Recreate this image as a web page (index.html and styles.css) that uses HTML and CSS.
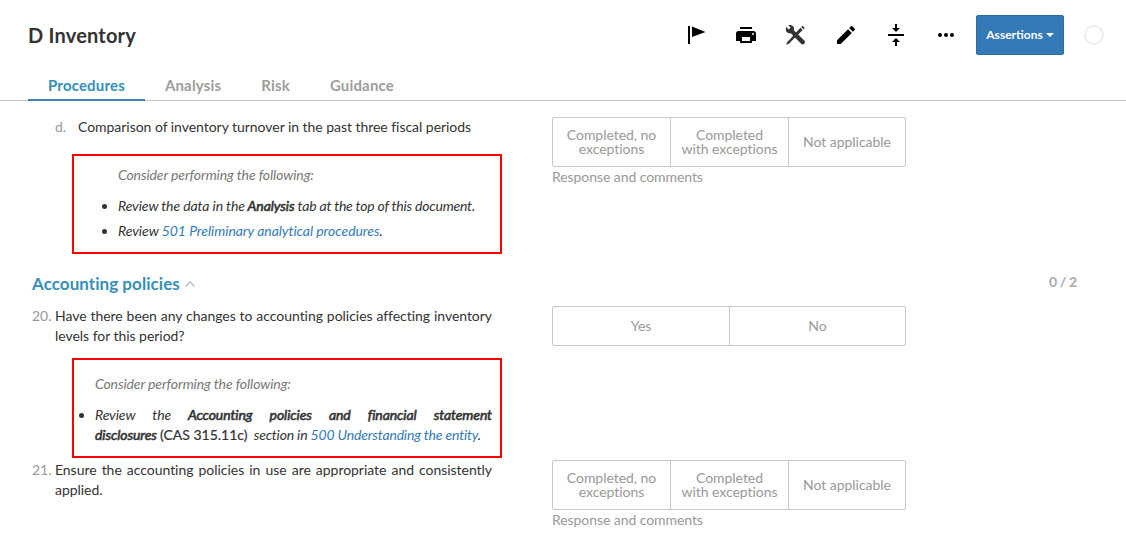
FILE: index.html
```html
<!DOCTYPE html>
<html lang="en">
<head>
<meta charset="utf-8">
<title>D Inventory</title>
<link rel="stylesheet" href="styles.css">
</head>
<body>
<header class="header">
  <h1 class="title"><span>D Inventory</span></h1>
  <div class="toolbar">
    <svg class="icon" viewBox="0 0 24 24"><path d="M3 3h2v18H3zM7 3.500L20.500 9 7 14z" transform="translate(1 0)"/></svg>
    <svg class="icon" viewBox="0 0 24 24"><path d="M6 4h12v2H6zM19.500 8h-15C3 8 2 9 2 10.500V18h4v2h12v-2h4v-7.500C22 9 21 8 19.500 8zM16 18H8v-4h8zm3-6a1 1 0 1 1 0-2 1 1 0 0 1 0 2z"/></svg>
    <svg class="icon tools" viewBox="0 0 24 24"><path d="M18.500 2.700l2.300 2.300-1.300 1.300L17.200 4zM16.400 4.800l2.300 2.300L6 19.600l-1.600-1.600z"/><path d="M4 17.500l2.500 2.500L2 21.800z"/><path d="M2.200 4l2.600 2.400 1.900-1.800L4.300 2.200c2-.7 3.900-.2 5 1.300.8 1.100.9 2.500.5 3.700l10.500 10.400c.9.900.9 2.200 0 3.100s-2.200.9-3.100 0L6.800 10.200c-1.400.4-3 .1-4-1.100C1.700 7.800 1.500 5.600 2.200 4z"/></svg>
    <svg class="icon" viewBox="0 0 24 24"><path d="M3 17.250V21h3.750L17.810 9.940l-3.750-3.750zM20.710 7.040a1 1 0 0 0 0-1.410l-2.340-2.340a1 1 0 0 0-1.410 0l-1.830 1.830 3.750 3.750z"/></svg>
    <svg class="icon" viewBox="0 0 24 24"><path d="M4 11h16v2H4zM11 1h2v4h3l-4 4-4-4h3zM11 23h2v-4h3l-4-4-4 4h3z"/></svg>
    <svg class="icon" viewBox="0 0 24 24"><circle cx="6" cy="12" r="2"/><circle cx="12" cy="12" r="2"/><circle cx="18" cy="12" r="2"/></svg>
  </div>
  <button class="assertions"><span class="assertions-label">Assertions</span><span class="caret"></span></button>
  <div class="ring"></div>
</header>
<nav class="tabs">
  <a class="tab active">Procedures</a>
  <a class="tab">Analysis</a>
  <a class="tab">Risk</a>
  <a class="tab">Guidance</a>
</nav>
<main class="content">
  <section class="row row-d">
    <div class="question">
      <div class="prompt sub"><span class="num">d.</span><p>Comparison of inventory turnover in the past three fiscal periods</p></div>
      <div class="guidance wide">
        <p class="lead">Consider performing the following:</p>
        <ul>
          <li>Review the data in the <b>Analysis</b> <span class="tight">tab at the top of this document.</span></li>
          <li class="open">Review <a>501 Preliminary analytical procedures</a>.</li>
        </ul>
      </div>
    </div>
    <div class="answer">
      <div class="choices three"><span>Completed, no<br>exceptions</span><span>Completed<br>with exceptions</span><span>Not applicable</span></div>
      <p class="comment">Response and comments</p>
    </div>
  </section>
  <div class="section-head">
    <h2>Accounting policies</h2>
    <svg class="chevron" viewBox="0 0 12 8"><path d="M1.500 6.500L6 2l4.500 4.500"/></svg>
    <span class="count">0 / 2</span>
  </div>
  <section class="row row-20">
    <div class="question">
      <div class="prompt"><span class="num">20.</span><p>Have there been any changes to accounting policies affecting inventory levels for this period?</p></div>
      <div class="guidance narrow">
        <p class="lead">Consider performing the following:</p>
        <ul>
          <li>Review the <b>Accounting policies and financial statement</b> <span class="keep"><b>disclosures</b> <span class="cite">(CAS 315.11c)</span></span><span class="tail">&nbsp; section in <a>500 Understanding the entity</a>.</span></li>
        </ul>
      </div>
    </div>
    <div class="answer">
      <div class="choices two"><span>Yes</span><span>No</span></div>
    </div>
  </section>
  <section class="row">
    <div class="question">
      <div class="prompt"><span class="num">21.</span><p>Ensure the accounting policies in use are appropriate and consistently applied.</p></div>
    </div>
    <div class="answer">
      <div class="choices three"><span>Completed, no<br>exceptions</span><span>Completed<br>with exceptions</span><span>Not applicable</span></div>
      <p class="comment">Response and comments</p>
    </div>
  </section>
</main>
</body>
</html>
```

FILE: styles.css
```css
* { box-sizing: border-box; }
body { margin: 0; height: 536px; overflow: hidden; background: #fff; color: #333; font: 14px/20px Lato, sans-serif; font-variant-ligatures: none; letter-spacing: -0.04px; }
p, h1, h2, ul { margin: 0; padding: 0; }

.header { display: flex; align-items: center; height: 70px; padding: 0 22px 0 28px; }
.title { flex: 1; font-size: 20px; line-height: 24px; font-weight: 700; letter-spacing: 0.2px; }
.toolbar { display: flex; gap: 26px; margin-right: 18px; }
.icon { display: block; width: 24px; height: 24px; fill: #000; }
.tools { fill: #333; }
.assertions { display: flex; align-items: center; justify-content: center; gap: 3px; width: 88px; height: 40px; padding: 0; border: 1px solid #2e6da4; border-radius: 2px; background: #337ab7; color: #fff; font: 700 12px/18px Lato, sans-serif; }
.caret { border: 4px solid transparent; border-top-color: #fff; border-bottom: 0; }
.ring { width: 20px; height: 20px; margin-left: 20px; border: 2px solid #eee; border-radius: 50%; }

.tabs { display: flex; height: 31px; padding-left: 28px; border-bottom: 1px solid #c4c4c4; }
.tab { height: 31px; padding: 5px 20px 0; color: #9d9d9d; font-size: 15px; font-weight: 700; letter-spacing: 0.17px; }
.tab.active { color: #348fb9; border-bottom: 2px solid #3d80b8; }

.content { padding: 16px 0 0 32px; }
.row { display: grid; grid-template-columns: 470px 354px; column-gap: 50px; }
.row-d { height: 157px; }
.row-20 { height: 154px; }
.prompt { display: flex; width: 460px; text-align: justify; }
.prompt .num { flex: 0 0 23px; color: #999; }
.prompt.sub { padding-left: 23px; }
.guidance { width: 430px; height: 100px; margin-left: 40px; border: 2px solid #f00; font-style: italic; letter-spacing: -0.1px; }
.guidance ul { padding-left: 0; }
.guidance b { font-weight: 400; -webkit-text-stroke: 0.6px #333; }
.tight { letter-spacing: -0.2px; }
.open { letter-spacing: -0.05px; }
.tail { letter-spacing: -0.17px; }
.keep { white-space: nowrap; }
.lead { color: #777; margin-bottom: 11px; }
.wide { margin-top: 17px; padding: 9px 8px 0 44px; }
.wide li + li { margin-top: 5px; }
.narrow { margin-top: 12px; padding: 14px 8px 0 21px; text-align: justify; }
.cite { font-style: normal; -webkit-text-stroke: 0.2px #333; letter-spacing: 0; }
a { color: #337ab7; }

.choices { display: grid; border: 1px solid #c8c8c8; border-radius: 2px; color: #999; line-height: 14px; text-align: center; }
.choices span { display: flex; align-items: center; justify-content: center; }
.choices span + span { border-left: 1px solid #c8c8c8; }
.three { height: 50px; grid-template-columns: 117px 118px 117px; }
.two { height: 40px; grid-template-columns: 176px 176px; }
.comment { color: #999; letter-spacing: -0.07px; }

.section-head { display: flex; align-items: center; height: 32px; padding: 0 49px 12px 0; }
.section-head h2 { color: #348fb9; font-size: 17px; line-height: 20px; font-weight: 700; letter-spacing: 0.05px; }
.chevron { width: 12px; height: 8px; margin-left: 4px; fill: none; stroke: #c4c4c4; stroke-width: 1.7; }
.count { margin: 0 0 4px auto; color: #aaa; font-weight: 700; word-spacing: -0.7px; }
```
